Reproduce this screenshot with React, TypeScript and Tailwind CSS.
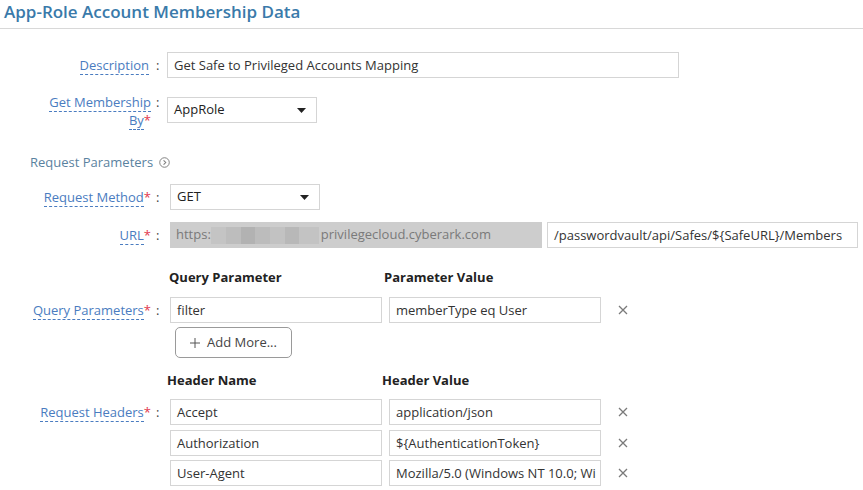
import React from "react";

const font = { fontFamily: '"Open Sans", "Liberation Sans", sans-serif' };

interface LabelProps {
  lines: string[];
  required?: boolean;
}

const FieldLabel = ({ lines, required }: LabelProps) => (
  <div
    className={
      "w-[152px] text-right text-[13px] leading-[18px] text-[#4a7cc0] " +
      (required ? "pr-[1px]" : "pr-[3px]")
    }
  >
    {lines.map((l, i) => (
      <div key={i}>
        <span className="border-b border-dashed border-[#4a7cc0]">{l}</span>
        {required && i === lines.length - 1 && <span className="text-[#e2384d]">*</span>}
      </div>
    ))}
  </div>
);

const Colon = () => (
  <div className="w-[15px] pl-[4px] text-[13px] leading-[18px] text-[#444]">:</div>
);

const TextBox = ({ value, className }: { value: string; className: string }) => (
  <div
    className={
      "h-[26px] border border-[#d5d5d5] bg-white pl-[6px] text-[13px] leading-[24px] text-[#333] overflow-hidden whitespace-nowrap " +
      className
    }
  >
    {value}
  </div>
);

const Dropdown = ({ value, className }: { value: string; className: string }) => (
  <div
    className={
      "h-[26px] border border-[#d5d5d5] bg-white pl-[6px] pr-[10px] flex items-center justify-between text-[13px] text-[#222] " +
      className
    }
  >
    <span>{value}</span>
    <svg width="9" height="5" viewBox="0 0 9 5">
      <path d="M0 0 H9 L4.5 5 Z" fill="#222" />
    </svg>
  </div>
);

const CloseX = () => (
  <div className="w-[44px] h-[26px] flex items-center justify-center">
    <svg width="10" height="10" viewBox="0 0 10 10">
      <path d="M1 1 L9 9 M9 1 L1 9" stroke="#7a7a7a" strokeWidth="1.3" />
    </svg>
  </div>
);

export default function App() {
  return (
    <div className="w-[863px] h-[490px] bg-white overflow-hidden" style={font}>
      <div className="pl-[4px] pb-[4px] border-b border-[#d8d8d8]">
        <h1 className="text-[17px] leading-[24px] font-semibold text-[#3a7aaa]">
          App-Role Account Membership Data
        </h1>
      </div>

      {/* description */}
      <div className="flex items-start mt-[23px]">
        <div className="pt-[4px] flex">
          <FieldLabel lines={["Description"]} />
          <Colon />
        </div>
        <TextBox value="Get Safe to Privileged Accounts Mapping" className="w-[512px]" />
      </div>

      {/* get membership by */}
      <div className="flex items-start mt-[15px]">
        <div className="flex">
          <FieldLabel lines={["Get Membership", "By"]} required />
          <Colon />
        </div>
        <Dropdown value="AppRole" className="w-[150px] mt-[4px]" />
      </div>

      <div className="mt-[24px] pl-[30px] flex items-center gap-[6px] text-[13px] leading-[18px] text-[#5a82a0]">
        <span>Request Parameters</span>
        <svg width="11" height="11" viewBox="0 0 12 12">
          <circle cx="6" cy="6" r="5.2" fill="none" stroke="#777" strokeWidth="1" />
          <path d="M5 3.6 L7.4 6 L5 8.4" fill="none" stroke="#777" strokeWidth="1.1" />
        </svg>
      </div>

      {/* request method */}
      <div className="flex items-start mt-[13px]">
        <div className="pt-[4px] flex">
          <FieldLabel lines={["Request Method"]} required />
          <Colon />
        </div>
        <Dropdown value="GET" className="w-[150px] ml-[3px]" />
      </div>

      {/* url */}
      <div className="flex items-start mt-[12px]">
        <div className="pt-[4px] flex">
          <FieldLabel lines={["URL"]} required />
          <Colon />
        </div>
        <div className="ml-[3px] w-[372px] h-[26px] bg-[#cdcdcd] pl-[6px] flex items-center text-[13px] text-[#7a7a7a] whitespace-nowrap overflow-hidden">
          <span>https:</span>
          <div className="flex h-[17px] mr-[2px]">
            <div className="w-[15px] bg-[#c4c4c4]" />
            <div className="w-[15px] bg-[#bdbdbd]" />
            <div className="w-[14px] bg-[#b2b2b2]" />
            <div className="w-[15px] bg-[#bcbcbc]" />
            <div className="w-[15px] bg-[#c2c2c2]" />
            <div className="w-[14px] bg-[#b8b8b8]" />
            <div className="w-[20px] bg-[#c3c3c3]" />
          </div>
          <span>privilegecloud.cyberark.com</span>
        </div>
        <TextBox value="/passwordvault/api/Safes/${SafeURL}/Members" className="ml-[5px] w-[311px]" />
      </div>

      {/* query parameters */}
      <div className="flex mt-[20px] pl-[169px] text-[13px] leading-[18px] font-bold text-[#222]">
        <div className="w-[215px]">Query Parameter</div>
        <div>Parameter Value</div>
      </div>
      <div className="flex items-start mt-[11px]">
        <div className="pt-[4px] flex">
          <FieldLabel lines={["Query Parameters"]} required />
          <Colon />
        </div>
        <TextBox value="filter" className="ml-[3px] w-[212px]" />
        <TextBox value="memberType eq User" className="ml-[7px] w-[212px]" />
        <CloseX />
      </div>
      <div className="pl-[175px] mt-[4px]">
        <button className="w-[117px] h-[31px] border border-[#9a9a9a] rounded-[5px] bg-white text-[13px] text-[#444] flex items-center justify-center gap-[7px]">
          <svg width="10" height="10" viewBox="0 0 10 10">
            <path d="M5 0 V10 M0 5 H10" stroke="#555" strokeWidth="1" />
          </svg>
          <span>Add More...</span>
        </button>
      </div>

      {/* request headers */}
      <div className="flex mt-[13px] pl-[167px] text-[13px] leading-[18px] font-bold text-[#222]">
        <div className="w-[215px]">Header Name</div>
        <div>Header Value</div>
      </div>
      <div className="flex items-start mt-[10px]">
        <div className="pt-[4px] flex">
          <FieldLabel lines={["Request Headers"]} required />
          <Colon />
        </div>
        <TextBox value="Accept" className="ml-[3px] w-[212px]" />
        <TextBox value="application/json" className="ml-[7px] w-[212px]" />
        <CloseX />
      </div>
      <div className="flex items-start mt-[5px] pl-[170px]">
        <TextBox value="Authorization" className="w-[212px]" />
        <TextBox value="${AuthenticationToken}" className="ml-[7px] w-[212px]" />
        <CloseX />
      </div>
      <div className="flex items-start mt-[4px] pl-[170px]">
        <TextBox value="User-Agent" className="w-[212px]" />
        <TextBox value="Mozilla/5.0 (Windows NT 10.0; Wi" className="ml-[7px] w-[212px]" />
        <CloseX />
      </div>
    </div>
  );
}
